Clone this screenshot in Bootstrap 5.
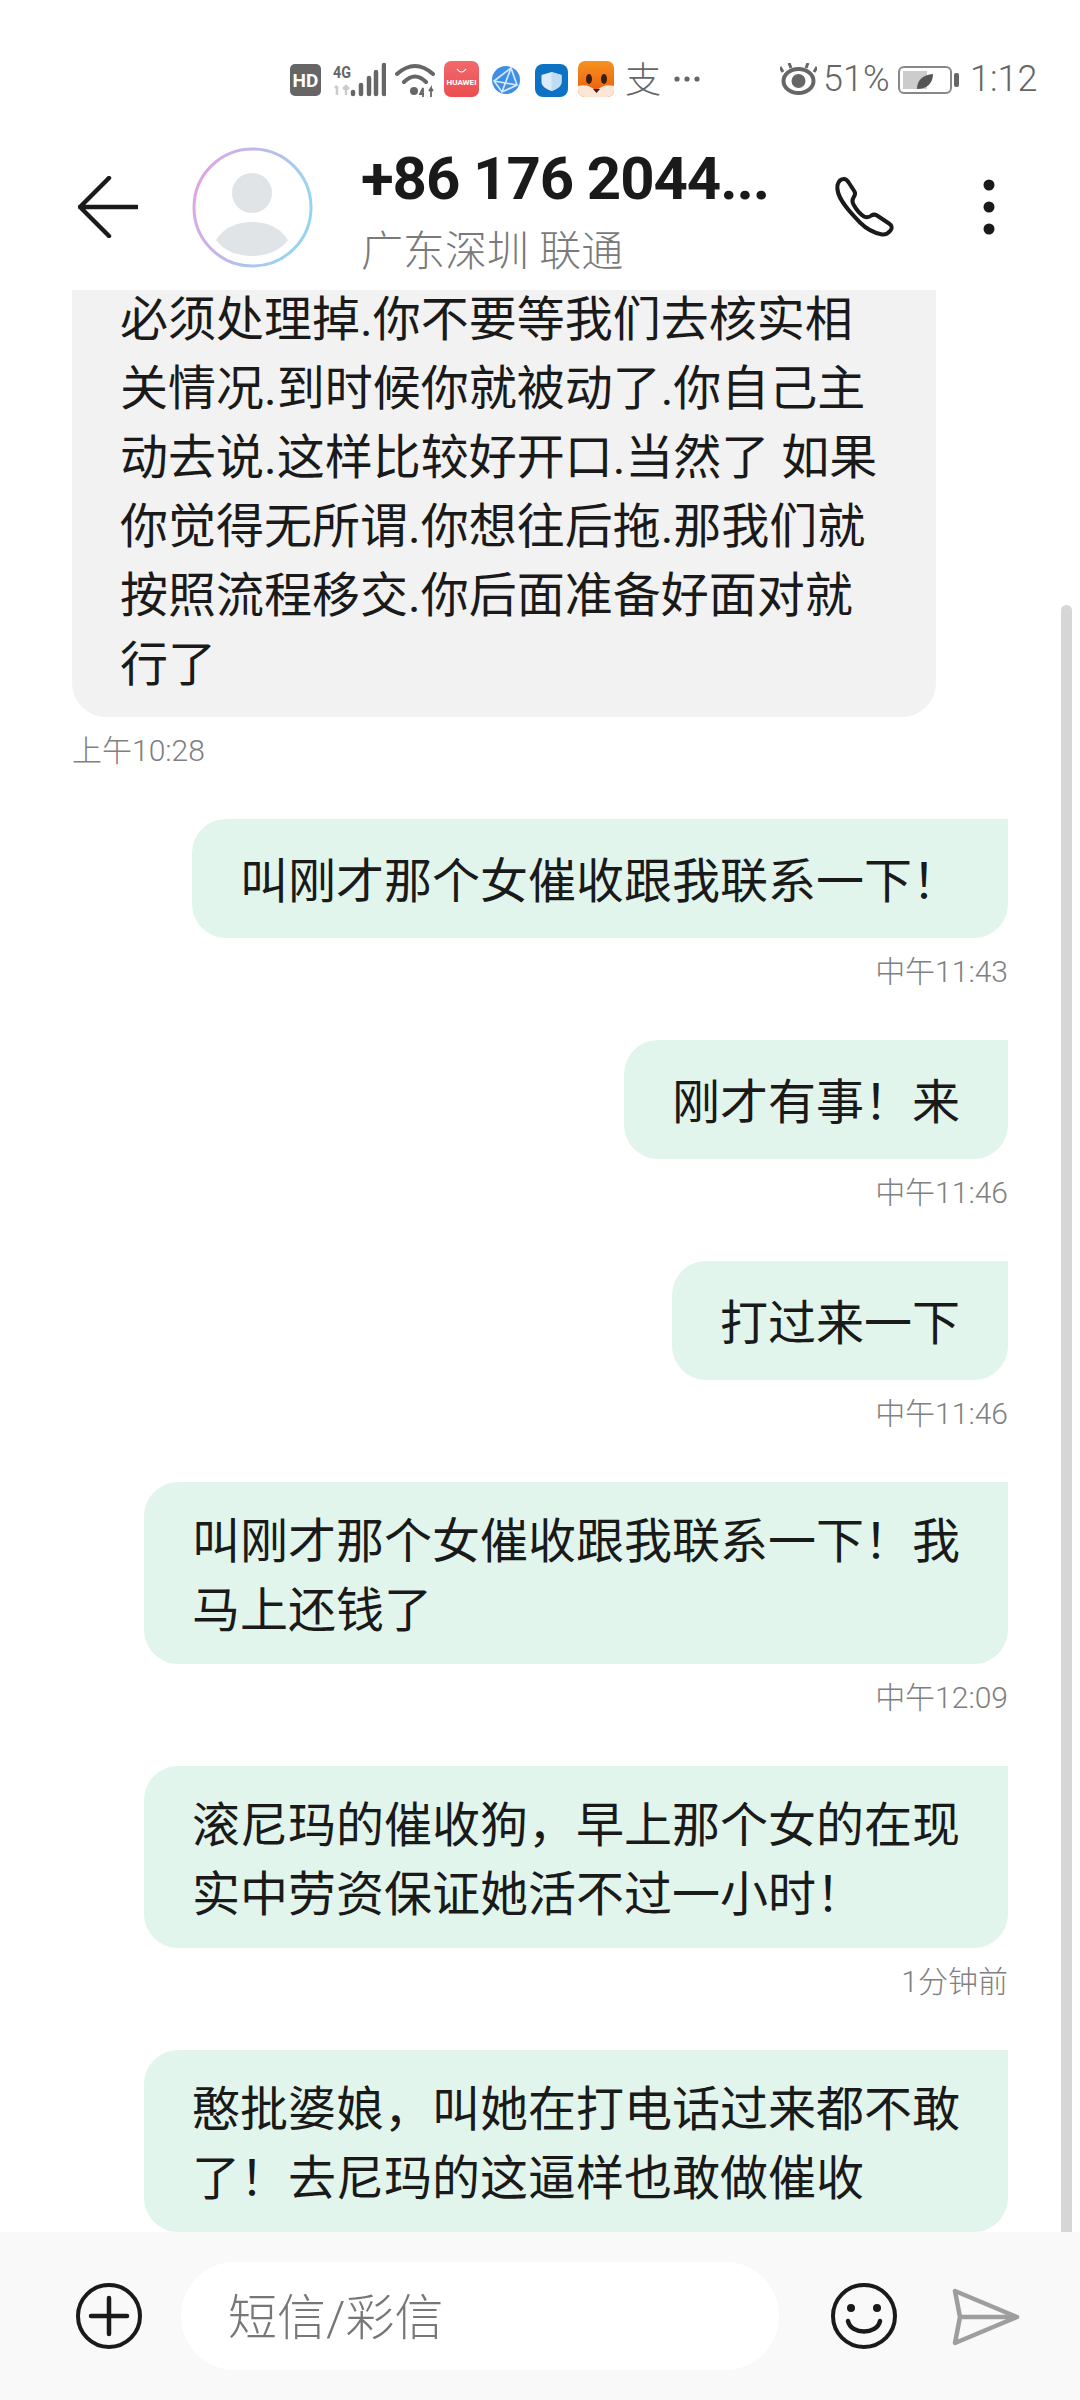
<!DOCTYPE html>
<html lang="zh-CN">

<head>
  <meta charset="utf-8">
  <meta name="viewport" content="width=device-width">
  <title>短信</title>
  <link href="https://cdn.jsdelivr.net/npm/bootstrap@5.3.3/dist/css/bootstrap.min.css" rel="stylesheet" type="text/css" />
  <style>
    body { background: #fff; font-family: Roboto, "Noto Sans CJK SC", sans-serif; color: #1a1a1a; }
    .phone { width: 1080px; height: 2400px; overflow: hidden; position: relative; }
    .status-row { height: 100px; padding: 61px 42px 0 290px; color: #666; font-size: 36px; line-height: 36px; }
    .status-row svg { display: block; flex: none; }
    .status-text { font-weight: 300; }
    .app-bar { height: 190px; padding: 47px 0 0 78px; flex: none; }
    .peer-info { width: 472px; margin-left: 47px; }
    .peer-name { font-size: 60px; font-weight: 700; line-height: 62px; margin-top: 1px; letter-spacing: -1.1px; }
    .peer-place { font-size: 42px; line-height: 48px; margin-top: 18px; color: #7a7a7a; font-weight: 300; }
    .msg-pane { height: 1942px; padding: 0 72px; overflow: hidden; flex: none; }
    .bubble { font-size: 48px; line-height: 69px; padding: 25px 48px 19px; min-height: 119px; white-space: nowrap; flex: none; }
    .bubble-in { background: #f2f2f2; width: 864px; padding: 0 48px 18px; border-radius: 0 0 34px 34px; }
    .line-first { line-height: 60px; margin-bottom: 4px; }
    .bubble-out { background: #e2f5ed; border-radius: 34px 0 34px 34px; }
    .msg-time { font-size: 30px; line-height: 42px; color: #808080; margin-top: 13px; margin-bottom: 47px; font-weight: 300; flex: none; }
    .scroll-thumb { position: absolute; left: 1061px; top: 605px; width: 11px; height: 1627px; background: #d6d6d6; border-radius: 6px 6px 0 0; }
    .input-bar { height: 168px; background: #f9f9f9; padding: 30px 0 0 76px; flex: none; }
    .input-pill { width: 598px; height: 108px; margin-left: 39px; padding: 5px 0 0 47px; background: #fff; border-radius: 54px; font-size: 49px; color: #777; font-weight: 300; }
  </style>
</head>

<body>
  <div class="phone d-flex flex-column">
    <div class="status-row d-flex align-items-start">
      <svg width="31" height="36" viewBox="0 0 31 36"><rect y="3" width="31" height="32" rx="5" fill="#666"/><text x="15.5" y="26" font-family="Roboto" font-weight="700" font-size="19" fill="#fff" text-anchor="middle">HD</text></svg>
      <svg width="54" height="36" viewBox="0 0 54 36" style="margin-left:11px"><text x="1" y="17" font-family="Roboto" font-weight="700" font-size="17" fill="#666" textLength="18" lengthAdjust="spacingAndGlyphs">4G</text><path d="M5 25v9M3 27l2-2M14 25v9M11 28l3-3 3 3" stroke="#ccc" stroke-width="2.500" fill="none"/><path d="M21 31v2M29 24v9M37 17v16M44 11v22M52 4v29" stroke="#666" stroke-width="4.500" stroke-linecap="round" fill="none"/></svg>
      <svg width="42" height="36" viewBox="0 0 42 36" style="margin-left:9px"><path d="M2 13Q20-3 38 13M9 21Q20 10 31 21" stroke="#666" stroke-width="4" stroke-linecap="round" fill="none"/><circle cx="19" cy="30" r="4" fill="#666"/><path d="M29 33h-4l3-6v9M36 36v-9l-2 3M36 27l2 3" stroke="#666" stroke-width="1.800" fill="none"/></svg>
      <svg width="35" height="36" viewBox="0 0 35 36" style="margin-left:7px"><defs><linearGradient id="hw" x1="0" y1="0" x2="0" y2="1"><stop offset="0" stop-color="#f2686c"/><stop offset="1" stop-color="#ea4e50"/></linearGradient></defs><rect width="35" height="36" rx="7" fill="url(#hw)"/><path d="M13 8q4.500 6 9 0" stroke="#fff" stroke-width="1.200" fill="none"/><text x="17.500" y="24" font-family="Roboto" font-size="7" font-weight="700" fill="#fff" text-anchor="middle" textLength="30" lengthAdjust="spacingAndGlyphs">HUAWEI</text></svg>
      <svg width="28" height="28" viewBox="0 0 28 28" style="margin:5px 0 0 13px"><circle cx="14" cy="14" r="14" fill="#3f8ee8"/><path d="M2 15L19 2l6 17-15 7zM19 2l-9 24M2 15l23 4" stroke="#d5e8fc" stroke-width="1.700" fill="none"/></svg>
      <svg width="33" height="33" viewBox="0 0 33 33" style="margin:3px 0 0 15px"><rect width="33" height="33" rx="8" fill="#0d72c4"/><path d="M16.500 8l10 3v7c0 4-4 7-10 9-6-2-10-5-10-9v-7z" fill="#dcedf9"/><path d="M16.500 8l10 3v7c0 4-4 7-10 9z" fill="#bfdcf2"/></svg>
      <svg width="36" height="36" viewBox="0 0 36 36" style="margin-left:10px"><defs><linearGradient id="fx" x1="0" y1="0" x2="0" y2="1"><stop offset="0" stop-color="#f79320"/><stop offset="1" stop-color="#e9560c"/></linearGradient></defs><rect width="36" height="36" rx="7" fill="url(#fx)"/><path d="M0 25q10-3 18 5 8-8 18-5v4a7 7 0 0 1-7 7H7a7 7 0 0 1-7-7z" fill="#fde6d6"/><ellipse cx="11" cy="18" rx="3" ry="5" fill="#3a1d10"/><ellipse cx="26" cy="18" rx="3" ry="5" fill="#3a1d10"/><path d="M15 28h7l-3.500 4z" fill="#3a1d10"/></svg>
      <span class="status-text" style="margin:2px 0 0 11px;width:36px">支</span>
      <span class="status-text d-flex align-items-center" style="height:36px;margin-left:13px"><svg width="26" height="6" viewBox="0 0 26 6"><circle cx="3" cy="3" r="2.600" fill="#666"/><circle cx="13" cy="3" r="2.600" fill="#666"/><circle cx="23" cy="3" r="2.600" fill="#666"/></svg></span>
      <svg width="37" height="32" viewBox="0 0 37 32" style="margin:2px 0 0 80px"><ellipse cx="18.500" cy="18" rx="15" ry="12" fill="none" stroke="#666" stroke-width="4"/><circle cx="18.500" cy="18" r="7" fill="#666"/><path d="M3 9L0 4M11 5L9 0M26 5l2-5M34 9l3-5" stroke="#666" stroke-width="3"/></svg>
      <span class="status-text" style="margin-left:6px;width:65px;white-space:nowrap">51%</span>
      <svg width="62" height="32" viewBox="0 0 62 32" style="margin:3px 0 0 10px"><rect x="1" y="3" width="52" height="26" rx="5" fill="#fff" stroke="#888" stroke-width="2"/><rect x="5" y="7" width="24" height="18" fill="#ccc"/><path d="M19 25c0-9 6-14 16-15 0 9-6 15-16 15z" fill="#555"/><rect x="56" y="9" width="5" height="14" rx="2" fill="#666"/></svg>
      <span class="status-text" style="margin-left:10px;white-space:nowrap">1:12</span>
    </div>

    <div class="app-bar d-flex align-items-start">
      <svg width="60" height="62" viewBox="0 0 60 62" style="margin-top:29px"><path d="M31 2L2 31l29 29M2 31h57" fill="none" stroke="#1a1a1a" stroke-width="4.500" stroke-linecap="round" stroke-linejoin="round"/></svg>
      <svg width="122" height="122" viewBox="0 0 122 122" style="margin-left:54px"><defs><linearGradient id="ring" x1="0" y1="0" x2="1" y2="0.300"><stop offset="0" stop-color="#e6a0e2"/><stop offset="1" stop-color="#98d4f0"/></linearGradient></defs><circle cx="60.500" cy="60.500" r="58.500" fill="#fff" stroke="url(#ring)" stroke-width="3"/><circle cx="60" cy="46" r="20" fill="#e0e4e6"/><path d="M24 93C32 80 46 75 60 75S88 80 96 93C88 104 74 109 60 109S32 104 24 93z" fill="#e0e4e6"/></svg>
      <div class="peer-info">
        <div class="peer-name">+86 176 2044...</div>
        <div class="peer-place">广东深圳 联通</div>
      </div>
      <svg width="62" height="62" viewBox="0 0 62 62" style="margin-top:29px"><path d="M4.500 9C5.500 5.500 8 3 11 3C13 3 14.500 4.500 16 7L21.500 15.500C23 18 21.500 20 20.500 21.500C19 24 19 26 20.500 28.500C23.500 34 27 38 31 40.500C34 42 36.500 41 38.500 39.500C40 38.500 41.500 38 44 39.500L56 47.500C59 49.500 59.500 52 57.500 54.500C55 57.500 52.500 59 49 58.500C41 57 33.500 53 27 46.500C14 33.500 2.500 20 4.500 9z" fill="none" stroke="#1a1a1a" stroke-width="4" stroke-linejoin="round"/></svg>
      <svg width="12" height="56" viewBox="0 0 12 56" style="margin:32px 0 0 88px"><circle cx="6" cy="6" r="5.500" fill="#1a1a1a"/><circle cx="6" cy="28" r="5.500" fill="#1a1a1a"/><circle cx="6" cy="50" r="5.500" fill="#1a1a1a"/></svg>
    </div>

    <div class="msg-pane d-flex flex-column justify-content-end">
      <div class="bubble bubble-in align-self-start"><div class="line-first">必须处理掉.你不要等我们去核实相</div>关情况.到时候你就被动了.你自己主<br>动去说.这样比较好开口.当然了 如果<br>你觉得无所谓.你想往后拖.那我们就<br>按照流程移交.你后面准备好面对就<br>行了</div>
      <div class="msg-time align-self-start">上午10:28</div>
      <div class="bubble bubble-out align-self-end d-flex align-items-center">叫刚才那个女催收跟我联系一下！</div>
      <div class="msg-time align-self-end">中午11:43</div>
      <div class="bubble bubble-out align-self-end d-flex align-items-center">刚才有事！来</div>
      <div class="msg-time align-self-end">中午11:46</div>
      <div class="bubble bubble-out align-self-end d-flex align-items-center">打过来一下</div>
      <div class="msg-time align-self-end">中午11:46</div>
      <div class="bubble bubble-out align-self-end">叫刚才那个女催收跟我联系一下！我<br>马上还钱了</div>
      <div class="msg-time align-self-end">中午12:09</div>
      <div class="bubble bubble-out align-self-end">滚尼玛的催收狗，早上那个女的在现<br>实中劳资保证她活不过一小时！</div>
      <div class="msg-time align-self-end">1分钟前</div>
      <div class="bubble bubble-out align-self-end">憨批婆娘，叫她在打电话过来都不敢<br>了！去尼玛的这逼样也敢做催收</div>
    </div>
    <div class="scroll-thumb"></div>

    <div class="input-bar d-flex align-items-start">
      <svg width="66" height="66" viewBox="0 0 66 66" style="margin-top:21px"><circle cx="33" cy="33" r="31" fill="none" stroke="#1a1a1a" stroke-width="4"/><path d="M33 15v36M15 33h36" stroke="#1a1a1a" stroke-width="4.500" stroke-linecap="round"/></svg>
      <div class="input-pill d-flex align-items-center">短信/彩信</div>
      <svg width="66" height="66" viewBox="0 0 66 66" style="margin:21px 0 0 52px"><circle cx="33" cy="33" r="31" fill="none" stroke="#1a1a1a" stroke-width="4"/><circle cx="20" cy="25" r="4" fill="#1a1a1a"/><circle cx="46" cy="25" r="4" fill="#1a1a1a"/><path d="M17 38c3 14 29 14 32 0" fill="none" stroke="#1a1a1a" stroke-width="4.500" stroke-linecap="round"/></svg>
      <svg width="68" height="58" viewBox="0 0 68 58" style="margin:26px 0 0 55px"><path d="M3 3l62 26L3 55l5-26zM8 29h57" fill="none" stroke="#9e9e9e" stroke-width="4.500" stroke-linejoin="round" stroke-linecap="round"/></svg>
    </div>
  </div>
  <script src="https://cdn.jsdelivr.net/npm/bootstrap@5.3.3/dist/js/bootstrap.bundle.min.js"></script>
</body>

</html>
